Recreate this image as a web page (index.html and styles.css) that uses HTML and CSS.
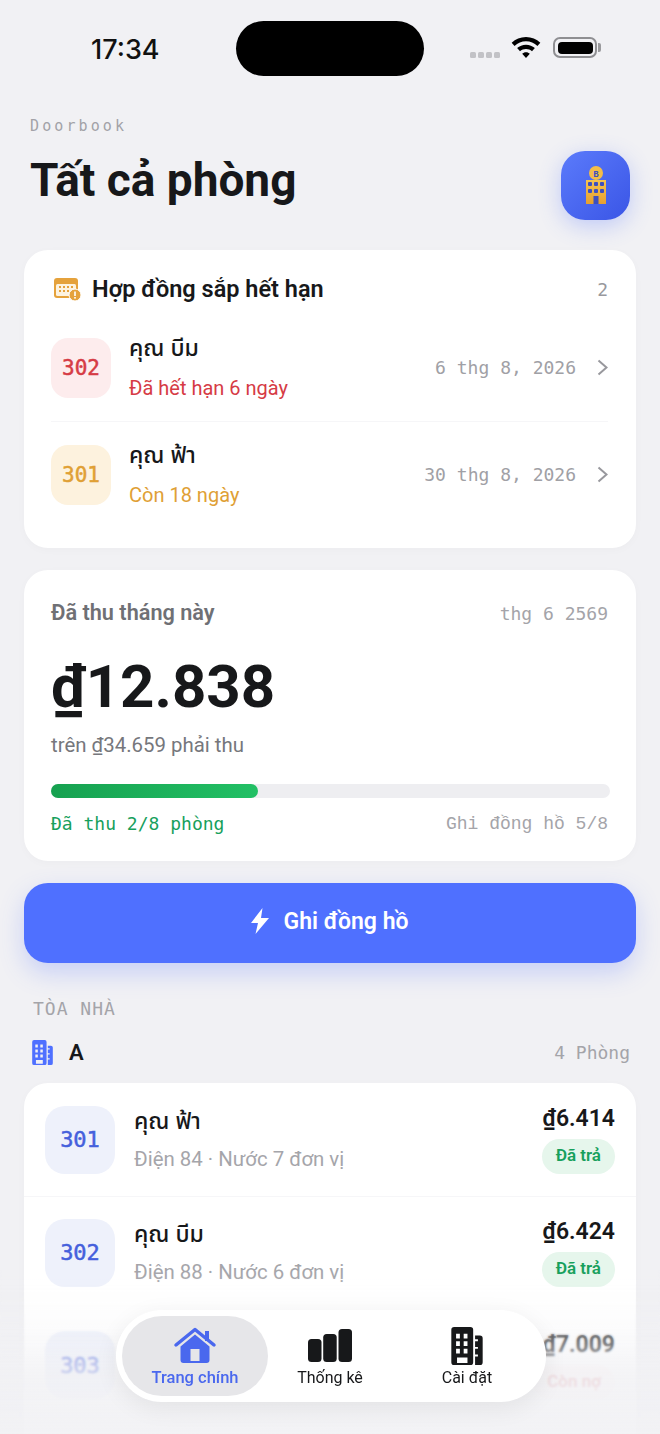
FILE: index.html
```html
<!DOCTYPE html>
<html lang="vi">
<head>
    <meta charset="UTF-8">
    <meta name="viewport" content="width=device-width, initial-scale=1.0">
    <title>Doorbook</title>
    <link rel="stylesheet" href="styles.css">
</head>
<body>
    <svg class="defs" aria-hidden="true">
        <symbol id="tower" viewBox="0 0 33 40">
            <path fill-rule="evenodd" d="M3 0h17a3 3 0 0 1 3 3v34a3 3 0 0 1-3 3H3a3 3 0 0 1-3-3V3a3 3 0 0 1 3-3zM5 7v5h4V7zm8 0v5h4V7zM5 15v5h4v-5zm8 0v5h4v-5zM5 23v5h4v-5zm8 0v5h4v-5zM6 32v6h11v-6z"/>
            <path fill-rule="evenodd" d="M25 9h5a3 3 0 0 1 3 3v25a3 3 0 0 1-3 3h-5v-9h3v-2h-3v-6h3v-2h-3v-6h3v-2h-3z"/>
        </symbol>
    </svg>

    <header class="status-bar">
        <span class="clock">17:34</span>
        <div class="island"></div>
        <div class="status-icons">
            <div class="signal"><i></i><i></i><i></i><i></i></div>
            <svg class="wifi" viewBox="0 0 30 22"><path d="M15 0c5.800 0 11 2.300 15 6l-3 3.300C23.700 6.300 19.500 4.500 15 4.500S6.300 6.300 3 9.300L0 6C4 2.300 9.200 0 15 0zm0 8c3.600 0 6.800 1.300 9.300 3.600l-3 3.300c-1.700-1.500-3.900-2.400-6.300-2.400s-4.600.9-6.300 2.400l-3-3.300C8.200 9.300 11.400 8 15 8zm0 8c1.600 0 3 .6 4 1.600L15 22l-4-4.400c1-1 2.400-1.600 4-1.600z"/></svg>
            <div class="battery"><div class="battery-level"></div></div>
        </div>
    </header>

    <main class="page">
        <div class="page-head">
            <div>
                <div class="brand">Doorbook</div>
                <h1>Tất cả phòng</h1>
            </div>
            <div class="logo">
                <svg viewBox="0 0 24 40" width="24" height="40">
                    <defs>
                        <linearGradient id="gold" x1="0" y1="0" x2="0" y2="1">
                            <stop offset="0" stop-color="#f6c450"/>
                            <stop offset="1" stop-color="#e69f30"/>
                        </linearGradient>
                    </defs>
                    <circle cx="12" cy="7" r="7" fill="#f4bd48"/>
                    <text x="12" y="10.500" class="logo-letter">B</text>
                    <path d="M2 14h20v24H2z" fill="url(#gold)"/>
                    <g fill="#3d4fc0">
                        <rect x="4" y="16" width="4" height="4" rx="1"/><rect x="10" y="16" width="4" height="4" rx="1"/><rect x="16" y="16" width="4" height="4" rx="1"/>
                        <rect x="4" y="23" width="4" height="4" rx="1"/><rect x="10" y="23" width="4" height="4" rx="1"/><rect x="16" y="23" width="4" height="4" rx="1"/>
                        <rect x="9.500" y="30" width="5" height="8"/>
                    </g>
                </svg>
            </div>
        </div>

        <section class="card expiring">
            <div class="card-head">
                <svg class="cal-icon" viewBox="0 0 27 23">
                    <rect width="24" height="20" rx="3" fill="#e5a23c"/>
                    <rect x="2" y="6" width="20" height="12" rx="1.500" fill="#fdf3e0"/>
                    <g fill="#e5a23c"><rect x="5" y="8" width="2" height="2"/><rect x="9" y="8" width="2" height="2"/><rect x="13" y="8" width="2" height="2"/><rect x="17" y="8" width="2" height="2"/><rect x="5" y="12" width="2" height="2"/><rect x="9" y="12" width="2" height="2"/><rect x="13" y="12" width="2" height="2"/></g>
                    <circle cx="21" cy="17" r="6" fill="#e5a23c" stroke="#fff" stroke-width="1"/>
                    <rect x="20.200" y="13.500" width="1.600" height="4.500" fill="#fff"/><rect x="20.200" y="19" width="1.600" height="1.600" fill="#fff"/>
                </svg>
                <h2>Hợp đồng sắp hết hạn</h2>
                <span class="count">2</span>
            </div>
            <div class="lease">
                <div class="lease-no red">302</div>
                <div class="lease-info">
                    <div class="name">คุณ บีม</div>
                    <div class="lease-note red-text">Đã hết hạn 6 ngày</div>
                </div>
                <span class="lease-date">6 thg 8, 2026</span>
                <svg class="chev" viewBox="0 0 11 17"><path d="M1.500 1.500l8 7-8 7"/></svg>
            </div>
            <div class="lease">
                <div class="lease-no amber">301</div>
                <div class="lease-info">
                    <div class="name">คุณ ฟ้า</div>
                    <div class="lease-note amber-text">Còn 18 ngày</div>
                </div>
                <span class="lease-date">30 thg 8, 2026</span>
                <svg class="chev" viewBox="0 0 11 17"><path d="M1.500 1.500l8 7-8 7"/></svg>
            </div>
        </section>

        <section class="card income">
            <div class="income-head">
                <span class="income-label">Đã thu tháng này</span>
                <span class="mono-note">thg 6 2569</span>
            </div>
            <div class="income-amount">₫12.838</div>
            <div class="income-sub">trên ₫34.659 phải thu</div>
            <div class="bar"><div class="bar-fill" style="width: 37%"></div></div>
            <div class="income-foot">
                <span class="paid-count">Đã thu 2/8 phòng</span>
                <span class="mono-note meter-count">Ghi đồng hồ 5/8</span>
            </div>
        </section>

        <button class="meter-btn">
            <svg viewBox="0 0 18 26" width="18" height="26"><path d="M11.500 0L0 15h7L4.500 26 18 10h-8z" fill="#fff"/></svg>
            Ghi đồng hồ
        </button>

        <div class="section-label">TÒA NHÀ</div>
        <div class="building-row">
            <svg class="building-icon"><use href="#tower"/></svg>
            <span class="building-name">A</span>
            <span class="mono-note">4 Phòng</span>
        </div>

        <section class="card rooms">
            <div class="room">
                <div class="room-no">301</div>
                <div class="room-info">
                    <div class="name">คุณ ฟ้า</div>
                    <div class="room-use">Điện 84 · Nước 7 đơn vị</div>
                </div>
                <div class="room-bill">
                    <div class="room-amount">₫6.414</div>
                    <span class="pill paid">Đã trả</span>
                </div>
            </div>
            <div class="room">
                <div class="room-no">302</div>
                <div class="room-info">
                    <div class="name">คุณ บีม</div>
                    <div class="room-use">Điện 88 · Nước 6 đơn vị</div>
                </div>
                <div class="room-bill">
                    <div class="room-amount">₫6.424</div>
                    <span class="pill paid">Đã trả</span>
                </div>
            </div>
            <div class="room">
                <div class="room-no">303</div>
                <div class="room-bill">
                    <div class="room-amount">₫7.009</div>
                    <span class="pill owing">Còn nợ</span>
                </div>
            </div>
        </section>
    </main>

    <!-- blurred fade under the floating tabs -->
    <div class="bottom-fade"></div>

    <nav class="tabs">
        <a class="tab active">
            <svg class="tab-icon" viewBox="0 0 42 38">
                <path d="M2 18L21 2.500 40 18" fill="none" stroke="currentColor" stroke-width="3.500" stroke-linecap="round" stroke-linejoin="round"/>
                <path d="M31 4h4v10h-4z" fill="currentColor"/>
                <path fill-rule="evenodd" d="M21 7.500l14.500 12V33a3 3 0 0 1-3 3h-23a3 3 0 0 1-3-3V19.500zM16.500 22v12h9V22z" fill="currentColor"/>
            </svg>
            <span>Trang chính</span>
        </a>
        <a class="tab">
            <svg class="tab-icon" viewBox="0 0 44 38">
                <rect x="0" y="12" width="13.500" height="23" rx="3.500"/>
                <rect x="15.200" y="7" width="13.500" height="28" rx="3.500"/>
                <rect x="30.500" y="2" width="13.500" height="33" rx="3.500"/>
            </svg>
            <span>Thống kê</span>
        </a>
        <a class="tab">
            <svg class="tab-icon"><use href="#tower"/></svg>
            <span>Cài đặt</span>
        </a>
    </nav>
</body>
</html>
```

FILE: styles.css
```css
* { box-sizing: border-box; }
html, body {
    margin: 0;
    height: 100%;
}
body {
    position: relative;
    height: 1434px;
    overflow: hidden;
    background-color: #f1f1f4;
    color: #17181a;
    font-family: Roboto, "Noto Sans", sans-serif;
}
.defs { display: none; }

/* status bar */
.status-bar {
    height: 97px;
    padding: 21px 63px 0 91px;
    display: flex;
    align-items: flex-start;
}
.clock {
    width: 145px;
    margin-top: 12px;
    font: 550 27px Inter, sans-serif;
    color: #111;
}
.island {
    width: 188px;
    height: 55px;
    border-radius: 28px;
    background-color: #000;
}
.status-icons {
    margin-left: auto;
    margin-top: 16px;
    display: flex;
    align-items: center;
    gap: 12px;
}
.signal {
    display: flex;
    gap: 2px;
    margin: 14px -1px 0 0;
}
.signal i {
    width: 6px;
    height: 6px;
    border-radius: 1.5px;
    background-color: #c2c2c6;
}
.wifi { width: 30px; height: 21px; margin-top: -1px; }
.battery {
    position: relative;
    width: 44px;
    height: 21px;
    padding: 2.5px;
    border: 2px solid #8f8f92;
    border-radius: 7px;
}
.battery::after {
    content: "";
    position: absolute;
    right: -6px;
    top: 4px;
    width: 3px;
    height: 9px;
    border-radius: 0 2px 2px 0;
    background-color: #9a9a9d;
}
.battery-level {
    height: 100%;
    border-radius: 4px;
    background-color: #000;
}

.page { padding: 0 24px; }

.page-head {
    height: 153px;
    padding: 20px 6px 0;
    display: flex;
    justify-content: space-between;
}
.brand {
    font: 15px "DejaVu Sans Mono", monospace;
    letter-spacing: 3.1px;
    color: #a2a2a7;
}
h1 {
    margin: 17px 0 0;
    font-size: 46px;
    line-height: 56px;
    font-weight: 700;
    color: #17181a;
}
.logo {
    width: 69px;
    height: 69px;
    margin-top: 34px;
    border-radius: 24px;
    background: linear-gradient(135deg, #5b7bfb, #3a55e6);
    box-shadow: 0 6px 22px rgba(79, 112, 255, 0.3);
    display: flex;
    align-items: center;
    justify-content: center;
}
.logo-letter {
    font: 700 9px "Liberation Mono", monospace;
    fill: #3d4fc0;
    text-anchor: middle;
}

.card {
    background-color: #fff;
    border-radius: 24px;
    box-shadow: 0 2px 10px rgba(0, 0, 0, 0.025);
}

/* leases about to run out */
.expiring {
    height: 298px;
    padding: 0 28px 0 27px;
}
.card-head {
    height: 65px;
    padding-top: 13px;
    display: flex;
    align-items: center;
}
.cal-icon { width: 27px; height: 23px; margin: 0 11px 0 3px; }
h2 {
    margin: 0;
    font-size: 23.5px;
    font-weight: 600;
}
.count {
    margin-left: auto;
    font: 18px "DejaVu Sans Mono", monospace;
    color: #98989d;
}
.lease {
    height: 106.5px;
    display: flex;
    align-items: center;
    border-bottom: 1px solid #f6f6f8;
}
.lease:last-child { border-bottom: none; }
.lease-no {
    width: 60px;
    height: 60px;
    border-radius: 17px;
    display: flex;
    align-items: center;
    justify-content: center;
    font: 21px "DejaVu Sans Mono", monospace;
    -webkit-text-stroke: 0.5px currentColor;
}
.red { background-color: #fdeced; color: #d63b45; }
.amber { background-color: #fdf2de; color: #e0a035; }
.lease-info { margin-left: 18px; }
.name {
    font-family: "Noto Sans Thai", "Noto Sans", "DejaVu Sans", sans-serif;
    font-size: 23px;
    font-weight: 500;
    line-height: 28px;
    color: #17181a;
}
.lease-note { margin-top: 13px; font-size: 20px; line-height: 24px; }
.red-text { color: #d63b45; }
.amber-text { color: #e0a035; }
.lease-date {
    margin-left: auto;
    font: 18px "DejaVu Sans Mono", monospace;
    color: #a0a0a5;
}
.chev {
    width: 11px;
    height: 17px;
    margin-left: 21px;
    fill: none;
    stroke: #98989d;
    stroke-width: 2;
}

/* this month's takings */
.income {
    height: 291px;
    margin-top: 22px;
    padding: 30px 26px 0 27px;
}
.income-head, .income-foot {
    padding-right: 2px;
    display: flex;
    justify-content: space-between;
    align-items: center;
    line-height: 24px;
}
.income-head { height: 26px; }
.income-label {
    font-size: 21.7px;
    font-weight: 600;
    color: #6f7075;
}
.mono-note {
    font: 18px "DejaVu Sans Mono", monospace;
    color: #a4a4a9;
}
/* the mono face above has no ồ, this one does */
.meter-count {
    font-family: "Liberation Mono", monospace;
}
.income-amount {
    margin-top: 27px;
    font-size: 60px;
    line-height: 68px;
    font-weight: 700;
}
.income-sub {
    margin-top: 12px;
    font-size: 20.4px;
    line-height: 24px;
    color: #76777c;
}
.bar {
    height: 14px;
    margin-top: 27px;
    border-radius: 7px;
    background-color: #eeeef1;
}
.bar-fill {
    height: 100%;
    border-radius: 7px;
    background: linear-gradient(90deg, #16a150, #22c065);
}
.income-foot { margin-top: 15px; }
.paid-count {
    font: 18px "DejaVu Sans Mono", monospace;
    color: #17a05c;
}

.meter-btn {
    width: 100%;
    height: 80px;
    margin-top: 22px;
    padding: 0 0 4px;
    border: none;
    border-radius: 24px;
    background-color: #4f70ff;
    box-shadow: 0 10px 24px rgba(79, 112, 255, 0.25);
    color: #fff;
    font: 600 23px Roboto, sans-serif;
    display: flex;
    align-items: center;
    justify-content: center;
    gap: 14px;
}

.section-label {
    margin: 34px 0 0 9px;
    font: 18px "DejaVu Sans Mono", monospace;
    letter-spacing: 1px;
    line-height: 24px;
    color: #a4a4a9;
}
.building-row {
    height: 50px;
    margin-top: 6px;
    padding: 0 6px 0 8px;
    display: flex;
    align-items: center;
}
.building-icon { width: 21px; height: 25px; fill: #4f70ff; }
.building-name {
    margin-left: 16px;
    font-size: 22px;
    font-weight: 600;
}
.building-row .mono-note { margin-left: auto; }

/* rooms */
.rooms {
    height: 420px;
    margin-top: 6px;
    padding-top: 1px;
}
.room {
    height: 112.5px;
    padding: 0 21px;
    display: flex;
    align-items: center;
}
.room:first-child { border-bottom: 1px solid #f6f6f8; }
.room-no {
    width: 70px;
    height: 68px;
    border-radius: 20px;
    background-color: #eef1fb;
    color: #4560dc;
    display: flex;
    align-items: center;
    justify-content: center;
    font: 22px "DejaVu Sans Mono", monospace;
    -webkit-text-stroke: 0.5px currentColor;
}
.room-info { margin-left: 19px; }
.room-use {
    margin-top: 11px;
    font-size: 20.4px;
    line-height: 24px;
    color: #a5a5aa;
}
.room-bill {
    margin-left: auto;
    display: flex;
    flex-direction: column;
    align-items: flex-end;
    gap: 7px;
}
.room-amount { font-size: 23px; font-weight: 600; }
.pill {
    height: 35px;
    padding: 0 14px;
    border-radius: 18px;
    font-size: 17px;
    font-weight: 600;
    line-height: 33px;
}
.paid { background-color: #e6f6ec; color: #17a05c; }
.owing { background-color: #fef7f7; color: #e0848b; }

/* floating tabs */
.bottom-fade {
    position: absolute;
    left: 0;
    right: 0;
    bottom: 0;
    height: 165px;
    background: linear-gradient(180deg, rgba(241, 241, 244, 0) 0%, rgba(241, 241, 244, 0.5) 46%, rgba(241, 241, 244, 0.82) 67%, rgba(241, 241, 244, 0.9) 100%);
    backdrop-filter: blur(1px);
    -webkit-mask-image: linear-gradient(180deg, transparent, #000 55%);
    mask-image: linear-gradient(180deg, transparent, #000 55%);
}
.tabs {
    position: absolute;
    left: 116px;
    top: 1310px;
    width: 430px;
    height: 92px;
    padding: 6px;
    border-radius: 46px;
    background-color: #fff;
    box-shadow: 0 6px 24px rgba(0, 0, 0, 0.07);
    display: flex;
}
.tab {
    flex: 0 0 146px;
    height: 80px;
    border-radius: 40px;
    display: flex;
    flex-direction: column;
    align-items: center;
    padding-top: 11px;
    font-size: 16px;
    font-weight: 400;
    color: #17181a;
}
.tab + .tab { flex: 0 0 124px; }
.tab:last-child { flex: 0 0 150px; }
.tab-icon {
    width: 44px;
    height: 38px;
    fill: currentColor;
    margin-bottom: 3px;
}
.tab span { line-height: 20px; }
.tab.active {
    background-color: #e6e6e9;
    color: #4a68ee;
    font-size: 16.5px;
    font-weight: 500;
}
```
